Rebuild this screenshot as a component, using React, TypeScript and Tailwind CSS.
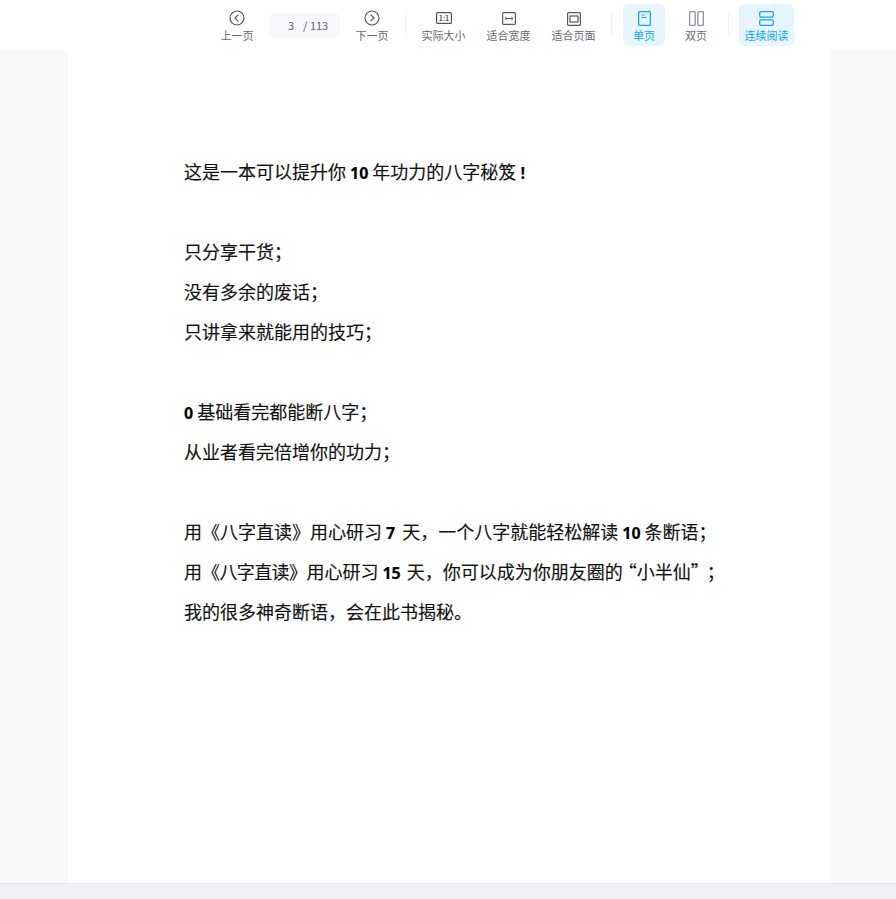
import { ReactNode } from "react";

const stroke = "currentColor";

function Svg({ children, w = 16, h = 16 }: { children: ReactNode; w?: number; h?: number }) {
  return (
    <svg width={w} height={h} viewBox={`0 0 ${w} ${h}`} fill="none" stroke={stroke} strokeWidth="1.2">
      {children}
    </svg>
  );
}

const icons = {
  prev: (
    <Svg>
      <circle cx="8" cy="8" r="7" />
      <path d="M9.4 4.6 6 8l3.4 3.4" />
    </Svg>
  ),
  next: (
    <Svg>
      <circle cx="8" cy="8" r="7" />
      <path d="M6.6 4.6 10 8l-3.4 3.4" />
    </Svg>
  ),
  actual: (
    <svg width="16" height="12" viewBox="0 0 16 12" fill="none" stroke={stroke} strokeWidth="1.2" className="mb-[2px]">
      <rect x="0.6" y="0.6" width="14.8" height="10.8" rx="1" />
      <text x="8" y="8.6" textAnchor="middle" fontSize="7" fontWeight="700" fill="#4f5259" stroke="none">
        1:1
      </text>
    </svg>
  ),
  width: (
    <svg width="14" height="13" viewBox="0 0 14 13" fill="none" stroke={stroke} strokeWidth="1.2" className="mb-[1px]">
      <rect x="0.6" y="0.6" width="12.8" height="11.8" rx="1" />
      <path d="M3 6.5h8M4.6 5 3 6.5 4.6 8M9.4 5 11 6.5 9.4 8" strokeWidth="1" />
    </svg>
  ),
  page: (
    <svg width="14" height="14" viewBox="0 0 14 14" fill="none" stroke={stroke} strokeWidth="1.2">
      <rect x="0.6" y="0.6" width="12.8" height="12.8" rx="1" />
      <rect x="3" y="4" width="8" height="6" />
    </svg>
  ),
  single: (
    <svg width="13" height="15" viewBox="0 0 13 15" fill="none" stroke={stroke} strokeWidth="1.3">
      <rect x="0.6" y="0.6" width="11.8" height="13.8" rx="1.5" />
      <path d="M3.5 4h3M3.5 6.5h5" strokeWidth="1" />
    </svg>
  ),
  double: (
    <svg width="15" height="15" viewBox="0 0 15 15" fill="none" stroke="#8d9098" strokeWidth="1.3">
      <rect x="0.6" y="0.6" width="5.6" height="13.8" rx="1.2" />
      <rect x="8.8" y="0.6" width="5.6" height="13.8" rx="1.2" />
    </svg>
  ),
  scroll: (
    <svg width="15" height="15" viewBox="0 0 15 15" fill="none" stroke={stroke} strokeWidth="1.3">
      <rect x="0.7" y="0.7" width="13.6" height="5.4" rx="1.3" />
      <rect x="0.7" y="8.9" width="13.6" height="5.4" rx="1.3" />
    </svg>
  ),
};

function ToolButton({
  icon,
  label,
  className,
  active,
}: {
  icon: ReactNode;
  label: string;
  className: string;
  active?: boolean;
}) {
  return (
    <div
      className={`flex h-[42px] shrink-0 flex-col items-center rounded-md ${
        active ? "bg-[#e6f5fe] text-[#12a5ee]" : "text-[#55585f]"
      } ${className}`}
    >
      <div className="flex h-[22px] items-end justify-center">{icon}</div>
      <span className={`mt-[1px] text-[11px] leading-[16px] whitespace-nowrap ${active ? "text-[#12a5ee]" : "text-[#666a72]"}`}>
        {label}
      </span>
    </div>
  );
}

function Divider({ className }: { className: string }) {
  return <div className={`mt-[9px] h-[22px] w-px shrink-0 bg-[#eeeff2] ${className}`} />;
}

function Line({ children }: { children?: ReactNode }) {
  return (
    <p className="h-10 text-[18px] leading-10 whitespace-nowrap text-[#111111] [-webkit-text-stroke:0.15px_#111111]">
      {children}
    </p>
  );
}

function Num({ children, className = "" }: { children: ReactNode; className?: string }) {
  return (
    <span className={`font-['Open_Sans','Liberation_Sans',sans-serif] text-[16px] font-bold text-black ${className}`}>
      {children}
    </span>
  );
}

export default function App() {
  return (
    <div className="flex h-[899px] w-[896px] flex-col overflow-hidden bg-[#f7f8fa] font-['Noto_Sans_CJK_SC','Noto_Sans',sans-serif]">
      <header className="flex h-[51px] shrink-0 items-start bg-white pt-[4px] pl-[220px]">
        <ToolButton icon={icons.prev} label="上一页" className="w-[34px]" />
        <div className="mt-[9px] ml-[15px] flex h-[25px] w-[71px] shrink-0 items-center rounded-md bg-[#f7f8fc] pl-[19px] text-[11px] text-[#5f6269]">
          <span>3</span>
          <span className="ml-[9px]">/ 113</span>
        </div>
        <ToolButton icon={icons.next} label="下一页" className="ml-[15px] w-[34px]" />
        <Divider className="ml-[16px]" />
        <ToolButton icon={icons.actual} label="实际大小" className="ml-[15px] w-[45px]" />
        <ToolButton icon={icons.width} label="适合宽度" className="ml-[20px] w-[45px]" />
        <ToolButton icon={icons.page} label="适合页面" className="ml-[20px] w-[45px]" />
        <Divider className="ml-[15px]" />
        <ToolButton icon={icons.single} label="单页" className="ml-[11px] w-[42px]" active />
        <ToolButton icon={icons.double} label="双页" className="ml-[20px] w-[22px]" />
        <Divider className="ml-[21px]" />
        <ToolButton icon={icons.scroll} label="连续阅读" className="ml-[10px] w-[55px]" active />
      </header>

      <main className="flex min-h-0 flex-1 pl-[68px]">
        <article className="w-[763px] bg-white pt-[100px] pl-[116px]">
          <Line>
            这是一本可以提升你 <Num>10</Num> 年功力的八字秘笈 <Num>!</Num>
          </Line>
          <Line />
          <Line>只分享干货；</Line>
          <Line>没有多余的废话；</Line>
          <Line>只讲拿来就能用的技巧；</Line>
          <Line />
          <Line>
            <Num>0</Num> 基础看完都能断八字；
          </Line>
          <Line>从业者看完倍增你的功力；</Line>
          <Line />
          <Line>
            用《八字直读》用心研习 <Num className="mr-[3px]">7</Num> 天，一个八字就能轻松解读 <Num>10</Num> 条断语；
          </Line>
          <Line>
            用<span className="tracking-[-0.6px]">《八字直读》</span>用心研习 <Num className="mr-[2px]">15</Num> 天，你可以成为你朋友圈的<span className="mr-[7px] -ml-[4px]">“小半仙”</span>；
          </Line>
          <Line>我的很多神奇断语，会在此书揭秘。</Line>
        </article>
      </main>

      <footer className="h-[16px] shrink-0 border-t border-[#e4e5ea] bg-[#f0f1f6]" />
    </div>
  );
}
